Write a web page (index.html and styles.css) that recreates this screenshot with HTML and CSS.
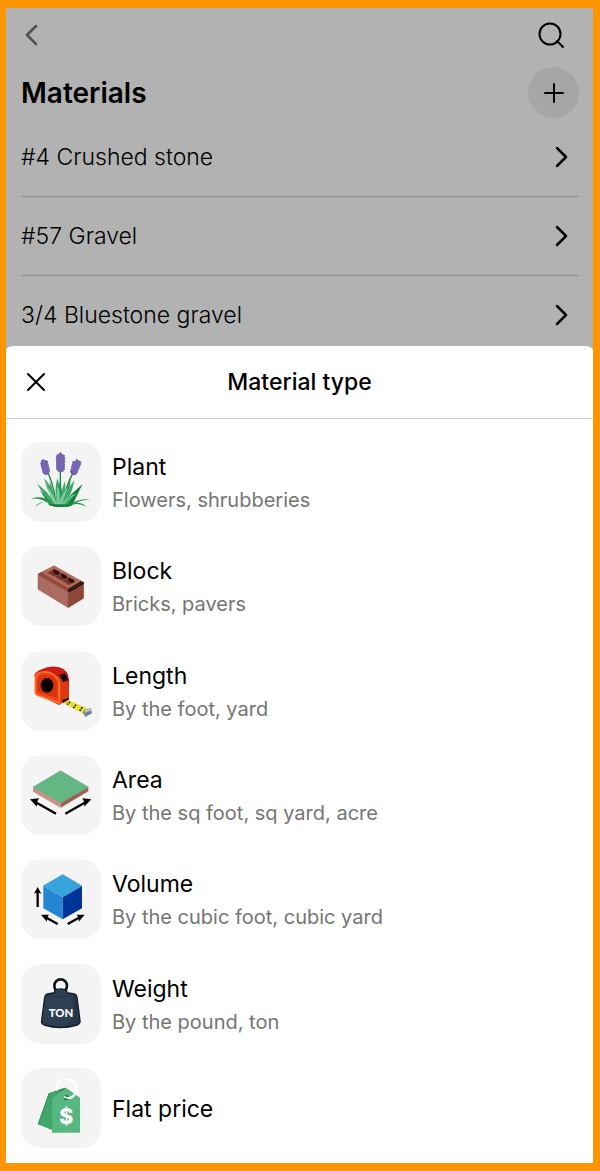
FILE: index.html
```
<!DOCTYPE html>
<html lang="en">
<head>
  <meta charset="UTF-8">
  <meta name="viewport" content="width=device-width, initial-scale=1.0">
  <title>Materials</title>
  <link rel="stylesheet" href="styles.css">
</head>
<body>
  <main class="materials">
    <div class="toolbar">
      <button class="icon-btn" type="button" aria-label="Back">
        <svg width="22" height="24" viewBox="0 0 22 24"><path class="back-line" d="M15 3 6 12l9 9"/></svg>
      </button>
      <button class="icon-btn" type="button" aria-label="Search">
        <svg width="28" height="28" viewBox="0 0 28 28"><path class="line" d="m20 20 6 6"/><circle class="line" cx="13" cy="13" r="10.5"/></svg>
      </button>
    </div>
    <div class="title-row">
      <h1>Materials</h1>
      <button class="add-btn" type="button" aria-label="Add material">
        <svg width="22" height="22" viewBox="0 0 22 22"><path class="line" d="M11 2v18M2 11h18"/></svg>
      </button>
    </div>
    <nav>
      <a class="material" href="#">#4 Crushed stone
        <svg width="14" height="24" viewBox="0 0 14 24"><path class="chevron" d="m3 3 9 9-9 9"/></svg>
      </a>
      <a class="material" href="#">#57 Gravel
        <svg width="14" height="24" viewBox="0 0 14 24"><path class="chevron" d="m3 3 9 9-9 9"/></svg>
      </a>
      <a class="material" href="#">3/4 Bluestone gravel
        <svg width="14" height="24" viewBox="0 0 14 24"><path class="chevron" d="m3 3 9 9-9 9"/></svg>
      </a>
    </nav>
  </main>

  <section class="sheet">
    <header class="sheet-header">
      <button class="icon-btn" type="button" aria-label="Close">
        <svg width="20" height="20" viewBox="0 0 20 20"><path class="line" d="m2 2 16 16M18 2 2 18"/></svg>
      </button>
      <h2>Material type</h2>
    </header>

    <div class="types">
      <button class="type" type="button">
        <svg class="tile" viewBox="18 21 240 240">
          <g fill="none" stroke="#17823d" stroke-width="4">
            <path d="M136 108v92M100 116q14 30 22 80M173 116q-20 36-26 80"/>
          </g>
          <path fill="#7565b3" stroke="#5f4fa2" stroke-width="3" stroke-dasharray="4 3" d="m126 60 6-2 2-5h4l2 5 7 2 2 6-1 38-5 6h-12l-6-6-1-38zM80 78l3-5 5 3 9 2 7 30-4 9-10 2-6-6-7-28zM174 79l6 1 5-7 4 3 9 5-1 7-12 28-7 4-11-6 0-7z"/>
          <path fill="#16803a" d="M106 212 74 166l38 34-8-62 18 56 14-58 8 60 24-68-10 60 45-42-29 60z"/>
          <path fill="#3eab6c" d="M112 210Q85 180 66 147q29 18 52 55Q96 160 87 130q25 23 38 70-8-36 2-70 12 30 9 70 2-35 14-62 5 33-7 62 10-34 35-64-6 38-25 64 14-20 32-26-12 13-29 36z"/>
          <path fill="#7fc99b" d="M119 210q-18-40-30-62 26 26 36 58-2-32 4-50 8 20 3 52 8-35 29-53-14 27-20 54 15-28 43-31-25 10-37 32z"/>
          <path fill="#2b9652" d="M106 210q-25-24-59-19 35-13 68 12-28-10-55 13 18-25 60-8h35q42-13 59 7-25-14-54-3 30-25 67-18-35-1-58 18l-8 3h-42z"/>
          <path fill="#138236" d="M99 207q38 5 75 0-10 9-37 9t-38-9z"/>
        </svg>
        <span class="text"><span class="name">Plant</span><span class="hint">Flowers, shrubberies</span></span>
      </button>

      <button class="type" type="button">
        <svg class="tile" viewBox="18 19 240 240">
          <path fill="#b0695b" stroke="#7c3c31" d="m69 103 48-25 87 49-44 28z"/>
          <path fill="#aa6b60" stroke="#823f35" d="m69 103 91 52v49l-91-55z"/>
          <path fill="#8e4638" stroke="#6f3026" d="m160 155 46-28v49l-46 28z"/>
          <path fill="#914b3e" d="m69 103 10-5 84 49-3 8v3l-91-52z"/>
          <path fill="#1d0906" d="m160 147 38-22 8 3v4l-46 27z"/>
          <path stroke="#8e4638" stroke-width="2" d="m162 151 42-25"/>
          <path fill="#7a352b" d="m98 99 18-11 18 9v5l-16 9zM121 111l18-11 17 9v5l-16 9zM142 124l18-11 18 9v5l-16 9z"/>
          <path fill="#2b100b" d="m116 88 18 9v5l-8 4-10-6zM139 100l17 9v5l-8 4-9-6zM160 113l18 9v5l-8 4-10-6z"/>
        </svg>
        <span class="text"><span class="name">Block</span><span class="hint">Bricks, pavers</span></span>
      </button>

      <button class="type" type="button">
        <svg class="tile" viewBox="18 18 240 240">
          <path fill="#cf1911" d="M58 90q4-11 24-18 23-12 51-5 27 8 29 37v56l-30 20-60-30z"/>
          <path fill="#df3810" d="m132 84 10 5q18 13 20 36v35l-28 18z"/>
          <path fill="#f04817" stroke="#ff702c" stroke-width="5" stroke-linejoin="round" d="M61 99q2-16 21-18 25-2 40 12 11 10 11 25v57l-68-26q-4-2-4-9z"/>
          <path fill="#dd3010" d="M68 101q3-12 19-12 39 0 40 34v37l-56-18q-4-3-4-8z"/>
          <ellipse cx="96" cy="121" rx="19" ry="22" fill="#080203"/>
          <path fill="none" stroke="#331014" stroke-width="2" stroke-dasharray="3 3" d="M91 106a12 16 0 0 0 8 32"/>
          <path fill="#100707" d="m132 89 18-4 10 20-16 6z"/>
          <path stroke="#40302e" stroke-width="2" d="m137 91 14-3M145 107l11-4"/>
          <path fill="#170807" d="m141 166 20-8v9l-16 8z"/>
          <path fill="#e9df27" d="m145 173 14-8 61 26-14 16z"/>
          <path stroke="#1a1705" stroke-width="5" stroke-dasharray="5 3" d="m165 171-9 8M183 179l-9 11M202 187l-9 12"/>
          <path fill="#777f8b" d="m204 203 4-9 20-4 3 15-20 11z"/>
          <path fill="#b4bec8" d="m208 194 20-4 2 6-20 8z"/>
        </svg>
        <span class="text"><span class="name">Length</span><span class="hint">By the foot, yard</span></span>
      </button>

      <button class="type" type="button">
        <svg class="tile" viewBox="18 16 240 240">
          <path fill="#ca9184" d="m54 112 83 48v14l-83-48z"/>
          <path fill="#a45f52" d="m137 160 83-48v13l-83 49z"/>
          <path fill="#62b783" stroke="#469c68" d="m54 112 83-49 83 49-83 48z"/>
          <path stroke="#000" stroke-width="7" d="m123 192-66-37M151 192l66-37"/>
          <path d="m45 149 27-3-6 11 0 14zM229 149l-27-3 6 11 0 14z"/>
        </svg>
        <span class="text"><span class="name">Area</span><span class="hint">By the sq foot, sq yard, acre</span></span>
      </button>

      <button class="type" type="button">
        <svg class="tile" viewBox="18 20 240 240">
          <path fill="#36a5dc" d="m85 101 58-34 58 34-58 34z"/>
          <path fill="#2386d3" d="m85 101 58 34v66l-58-33z"/>
          <path fill="#003499" d="m143 135 58-34v67l-58 33z"/>
          <path fill="none" stroke="#2a91ca" stroke-width="2" d="m85 101 58-34 58 34"/>
          <path stroke="#000" stroke-width="7" d="M68 164v-50M128 215l-42-23M158 215l42-23"/>
          <path d="m68 104 11 20-11-4-11 4zM78 187l24 0-6 9 0 12zM209 187l-24 0 6 9 0 12z"/>
        </svg>
        <span class="text"><span class="name">Volume</span><span class="hint">By the cubic foot, cubic yard</span></span>
      </button>

      <button class="type" type="button">
        <svg class="tile" viewBox="18 21 240 240">
          <circle cx="137" cy="86" r="19" fill="none" stroke="#111419" stroke-width="8"/>
          <path fill="#2d4053" stroke="#101b27" stroke-width="4" d="M119 107v-7q18-9 36 0v7l23 4q7 2 8 10l9 70q2 9-9 13-49 15-98 0-10-4-8-13l9-70q2-8 8-10z"/>
          <path fill="#243548" d="M173 112q10 2 11 10l9 69q1 8-9 11-22 7-47 7 42-14 40-48z"/>
          <path fill="none" stroke="#1a2837" stroke-width="2" d="M97 112q40 15 80 0"/>
          <text class="ton" x="138" y="179">TON</text>
        </svg>
        <span class="text"><span class="name">Weight</span><span class="hint">By the pound, ton</span></span>
      </button>

      <button class="type" type="button">
        <svg class="tile" viewBox="18 20 240 240">
          <path fill="#22894d" d="m101 96 48-17 20 12-30 121-71-23z"/>
          <path fill="#40a66a" d="m104 96 35-11-29 102v19l-40-17z"/>
          <path fill="#58b780" d="m111 111 42-31 42 29v105h-84z"/>
          <path fill="none" stroke="#fff" stroke-width="5" d="M125 88c-3-22 8-34 28-35 20 0 32 14 31 31-2 16-12 27-26 28"/>
          <circle cx="154" cy="109" r="8" fill="#1c8047"/>
          <path fill="none" stroke="#fff" stroke-width="5" d="M147 106q7 5 16 3 9-2 14-8"/>
          <text class="dollar" x="154" y="188">$</text>
        </svg>
        <span class="text"><span class="name">Flat price</span></span>
      </button>
    </div>
  </section>
</body>
</html>
```
FILE: styles.css
```
* {
  box-sizing: border-box;
}
body {
  margin: 0;
  min-height: 100vh;
  display: flex;
  flex-direction: column;
  border: solid #ff9500;
  border-width: 8px 7px 8px 6px;
  background-color: #b2b2b2;
  color: #000;
  font-family: Inter, "Liberation Sans", sans-serif;
}
h1, h2 {
  margin: 0;
}
button {
  padding: 0;
  border: none;
  background: none;
  color: inherit;
  font-family: inherit;
  cursor: pointer;
}
svg {
  display: block;
  flex-shrink: 0;
}
.line, .back-line, .chevron {
  fill: none;
  stroke: #000;
  stroke-width: 2;
  stroke-linecap: round;
  stroke-linejoin: round;
}
.back-line {
  stroke: #505050;
  stroke-width: 2.5;
}
.chevron {
  stroke-width: 2.5;
}

/* materials list */
.materials {
  padding: 0 14px 0 15px;
}
.toolbar {
  display: flex;
  align-items: center;
  justify-content: space-between;
  height: 54px;
  padding-right: 14px;
}
.title-row {
  display: flex;
  align-items: center;
  justify-content: space-between;
  padding-top: 5px;
}
h1 {
  font-size: 28px;
  font-weight: 600;
}
.add-btn {
  display: flex;
  align-items: center;
  justify-content: center;
  width: 51px;
  height: 51px;
  border-radius: 50%;
  background-color: #a6a6a6;
}
.material {
  display: flex;
  align-items: center;
  justify-content: space-between;
  height: 79px;
  padding-right: 11px;
  border-bottom: 1px solid #8f8f8f;
  color: #000;
  font-size: 23px;
  font-weight: 350;
  text-decoration: none;
}

/* bottom sheet */
.sheet {
  flex: 1;
  display: flex;
  flex-direction: column;
  margin-top: -9px;
  border-radius: 9px 9px 0 0 / 4px 4px 0 0;
  background-color: #fff;
}
.sheet-header {
  display: grid;
  grid-template-columns: 20px 1fr 20px;
  align-items: center;
  height: 73px;
  padding: 0 20px;
  border-bottom: 1px solid #d2d2d2;
}
h2 {
  font-size: 23px;
  font-weight: 500;
  text-align: center;
}
.types {
  flex: 1;
  display: flex;
  flex-direction: column;
  justify-content: space-between;
  padding: 23px 15px 15px;
}
.type {
  display: flex;
  align-items: center;
  gap: 11px;
  text-align: left;
}
.tile {
  width: 80px;
  height: 80px;
  border-radius: 20px;
  background-color: #f4f4f4;
}
.text {
  display: flex;
  flex-direction: column;
  gap: 5px;
  padding-top: 3px;
}
.name {
  font-size: 23px;
  line-height: 28px;
}
.hint {
  color: #757575;
  font-size: 20px;
  line-height: 28px;
}
.ton {
  fill: #fff;
  font-family: Lato, sans-serif;
  font-size: 34px;
  font-weight: 900;
  text-anchor: middle;
}
.dollar {
  fill: #fff;
  font-size: 64px;
  font-weight: 800;
  text-anchor: middle;
}
```
